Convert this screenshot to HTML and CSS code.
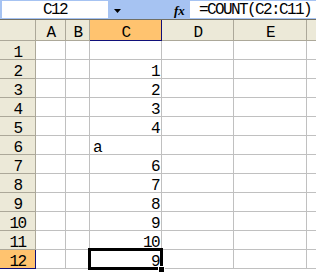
FILE: index.html
```html
<!DOCTYPE html>
<html lang="zh-CN">
<head>
    <meta charset="UTF-8">
    <title>COUNT</title>
    <link rel="stylesheet" href="styles.css">
</head>
<body>

    <div class="toolbar">
        <div class="namebox">C12</div>
        <div class="dropdown">
            <svg width="7" height="4" viewBox="0 0 7 4"><path d="M0 0h7L3.5 4z" fill="#000"/></svg>
        </div>
        <div class="fx">fx</div>
        <div class="formula">=COUNT(C2:C11)</div>
    </div>

    <div class="sheet">
        <!-- cabeçalho das colunas -->
        <div class="hd corner"></div>
        <div class="hd col">A</div>
        <div class="hd col">B</div>
        <div class="hd col sel-col">C</div>
        <div class="hd col">D</div>
        <div class="hd col">E</div>
        <div class="hd col last"></div>

        <div class="hd row">1</div><div class="c"></div><div class="c"></div><div class="c"></div><div class="c"></div><div class="c"></div><div class="c last"></div>
        <div class="hd row">2</div><div class="c"></div><div class="c"></div><div class="c num">1</div><div class="c"></div><div class="c"></div><div class="c last"></div>
        <div class="hd row">3</div><div class="c"></div><div class="c"></div><div class="c num">2</div><div class="c"></div><div class="c"></div><div class="c last"></div>
        <div class="hd row">4</div><div class="c"></div><div class="c"></div><div class="c num">3</div><div class="c"></div><div class="c"></div><div class="c last"></div>
        <div class="hd row">5</div><div class="c"></div><div class="c"></div><div class="c num">4</div><div class="c"></div><div class="c"></div><div class="c last"></div>
        <div class="hd row">6</div><div class="c"></div><div class="c"></div><div class="c txt">a</div><div class="c"></div><div class="c"></div><div class="c last"></div>
        <div class="hd row">7</div><div class="c"></div><div class="c"></div><div class="c num">6</div><div class="c"></div><div class="c"></div><div class="c last"></div>
        <div class="hd row">8</div><div class="c"></div><div class="c"></div><div class="c num">7</div><div class="c"></div><div class="c"></div><div class="c last"></div>
        <div class="hd row">9</div><div class="c"></div><div class="c"></div><div class="c num">8</div><div class="c"></div><div class="c"></div><div class="c last"></div>
        <div class="hd row">10</div><div class="c"></div><div class="c"></div><div class="c num">9</div><div class="c"></div><div class="c"></div><div class="c last"></div>
        <div class="hd row">11</div><div class="c"></div><div class="c"></div><div class="c num">10</div><div class="c"></div><div class="c"></div><div class="c last"></div>
        <div class="hd row sel-row">12</div><div class="c"></div><div class="c"></div><div class="c num active">9</div><div class="c"></div><div class="c"></div><div class="c last"></div>
    </div>

</body>
</html>
```

FILE: styles.css
```css
body {
    margin: 0;
    width: 316px;
    height: 272px;
    overflow: hidden;
    background: #fff;
    font-family: "Liberation Mono", "DejaVu Sans Mono", monospace;
    font-size: 16px;
    letter-spacing: -1.6px;
    color: #000;
}
.toolbar {
    display: flex;
    height: 20px;
    padding-top: 1px;
    box-sizing: border-box;
    background: #a6c3f2;
    border-bottom: 1px solid #716f64;
}
.namebox {
    margin-left: 2px;
    width: 106px;
    height: 17px;
    background: #fff;
    text-align: center;
    line-height: 19px;
}
.dropdown {
    width: 27px;
    padding-left: 6px;
    padding-top: 8px;
    box-sizing: border-box;
}
.dropdown svg {
    display: block;
}
.fx {
    margin-left: 39px;
    width: 16px;
    font-family: "Liberation Serif", serif;
    font-style: italic;
    font-weight: bold;
    font-size: 13px;
    letter-spacing: 0;
    line-height: 19px;
}
.formula {
    flex: 1;
    height: 17px;
    background: #fff;
    padding-left: 9px;
    line-height: 19px;
    white-space: nowrap;
}
.sheet {
    display: grid;
    grid-template-columns: 36px 30px 24px 72px 72px 73px 1fr;
    grid-template-rows: 21px;
    grid-auto-rows: 19px;
}
.sheet > div {
    box-sizing: border-box;
    border-right: 1px solid #c0c0c0;
    border-bottom: 1px solid #c0c0c0;
    padding-top: 3px;
    line-height: 18px;
    white-space: nowrap;
}
.sheet > .last {
    border-right: none;
}
.sheet > .hd {
    background: #ece9d8;
    border-color: #aca899;
    text-align: center;
}
.sheet > .col {
    padding-top: 3px;
    line-height: 20px;
}
.sheet > .sel-col,
.sheet > .sel-row {
    background: #ffc36f;
    border-bottom-color: #10107a;
    border-right-color: #10107a;
}
.num {
    text-align: right;
    padding-right: 2px;
}
.txt {
    padding-left: 3px;
}
.active {
    position: relative;
}
.active::after {
    content: "";
    position: absolute;
    left: -2px;
    top: -2px;
    width: 75px;
    height: 22px;
    box-sizing: border-box;
    border: 3px solid #000;
}
.active::before {
    content: "";
    position: absolute;
    right: -4px;
    bottom: -5px;
    width: 5px;
    height: 5px;
    background: #000;
    border: 1px solid #fff;
    z-index: 1;
}
```
